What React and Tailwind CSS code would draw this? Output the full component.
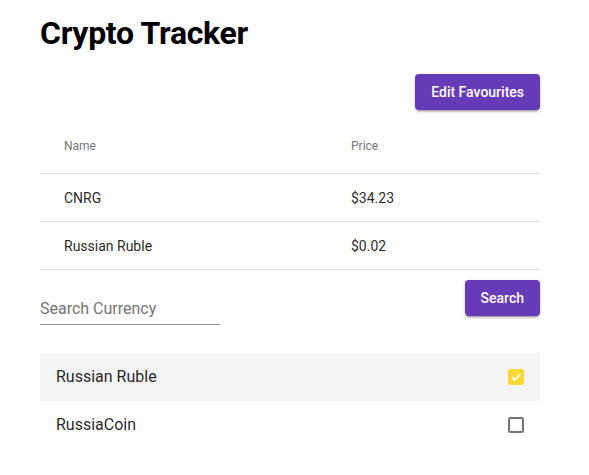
import { useState } from 'react';

const rows = [
    { name: 'CNRG', price: '$34.23' },
    { name: 'Russian Ruble', price: '$0.02' },
];

const btn = "h-9 px-4 rounded bg-[#673ab7] text-white text-sm font-medium shadow-[0_3px_1px_-2px_rgba(0,0,0,0.2),0_2px_2px_0_rgba(0,0,0,0.14),0_1px_5px_0_rgba(0,0,0,0.12)]";

export default function App() {
    const [checked, setChecked] = useState({ 'Russian Ruble': true, 'RussiaCoin': false });

    return (
        <div className="min-h-screen bg-white font-['Roboto',sans-serif] text-[rgba(0,0,0,0.87)]">
            <div className="w-[500px] ml-10 pt-[12px]">
                <h1 className="text-[32px] leading-[42px] font-bold text-black tracking-[-0.3px]">Crypto Tracker</h1>

                <div className="flex justify-end mt-[20px]">
                    <button className={btn}>Edit Favourites</button>
                </div>

                {/* tabela ulubionych */}
                <div className="mt-[8px]">
                    <div className="grid grid-cols-[287px_1fr] h-14 items-center border-b border-[#e0e0e0] text-xs text-[#757575]">
                        <div className="pl-6">Name</div>
                        <div className="pl-6">Price</div>
                    </div>
                    {rows.map((r) => (
                        <div key={r.name} className="grid grid-cols-[287px_1fr] h-12 items-center border-b border-[#e0e0e0] text-sm">
                            <div className="pl-6">{r.name}</div>
                            <div className="pl-6">{r.price}</div>
                        </div>
                    ))}
                </div>

                <div className="flex justify-between items-start mt-[10px]">
                    <input
                        type="text"
                        placeholder="Search Currency"
                        className="mt-[13px] w-[180px] h-8 border-b border-[#949494] text-base outline-none placeholder:text-[#757575]"
                    />
                    <button className={btn}>Search</button>
                </div>

                <div className="mt-7">
                    {Object.keys(checked).map((name, i) => (
                        <div
                            key={name}
                            onClick={() => setChecked({ ...checked, [name]: !checked[name] })}
                            className={"flex h-12 items-center justify-between px-4 text-base cursor-pointer " + (i === 0 ? "bg-[#f4f4f4]" : "")}
                        >
                            <span>{name}</span>
                            {checked[name] ? (
                                <span className="w-4 h-4 rounded-[2px] bg-[#fdd835] flex items-center justify-center">
                                    <svg viewBox="0 0 24 24" className="w-[14px] h-[14px]" fill="none" stroke="white" strokeWidth="3">
                                        <path d="M5 12.5l4.5 4.5L19 7.5" />
                                    </svg>
                                </span>
                            ) : (
                                <span className="w-4 h-4 rounded-[2px] border-2 border-[#757575]" />
                            )}
                        </div>
                    ))}
                </div>
            </div>
        </div>
    );
}
